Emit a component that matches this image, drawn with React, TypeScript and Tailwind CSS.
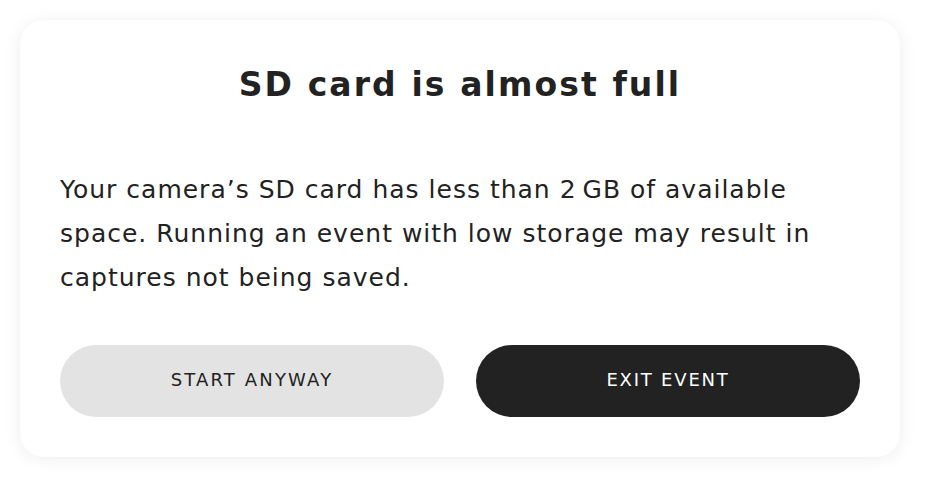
export default function App() {
  return (
    <div className="min-h-screen w-full bg-white pt-5 pl-5 font-['DejaVu_Sans','Noto_Sans',sans-serif] text-[#222222]">
      <div className="w-[880px] rounded-[24px] bg-white px-10 pt-[45px] pb-10 shadow-[0_2px_18px_rgba(0,0,0,0.07)]">
        <h1 className="text-center text-[33px] leading-[40px] font-bold tracking-[2.1px]">
          SD card is almost full
        </h1>
        <p className="mt-[63px] text-[25px] leading-[44px] tracking-[1px] whitespace-nowrap">
          Your camera’s SD card has less than 2&#8239;GB of available
          <br />
          space. Running an event with low storage may result in
          <br />
          captures not being saved.
        </p>
        <div className="mt-[45px] flex gap-8">
          <button className="h-[72px] flex-1 rounded-full bg-[#e3e3e3] pb-[3px] text-[18px] tracking-[0.12em] text-[#222222]">
            START ANYWAY
          </button>
          <button className="h-[72px] flex-1 rounded-full bg-[#222222] pb-[3px] text-[18px] tracking-[0.1em] text-white">
            EXIT EVENT
          </button>
        </div>
      </div>
    </div>
  );
}
